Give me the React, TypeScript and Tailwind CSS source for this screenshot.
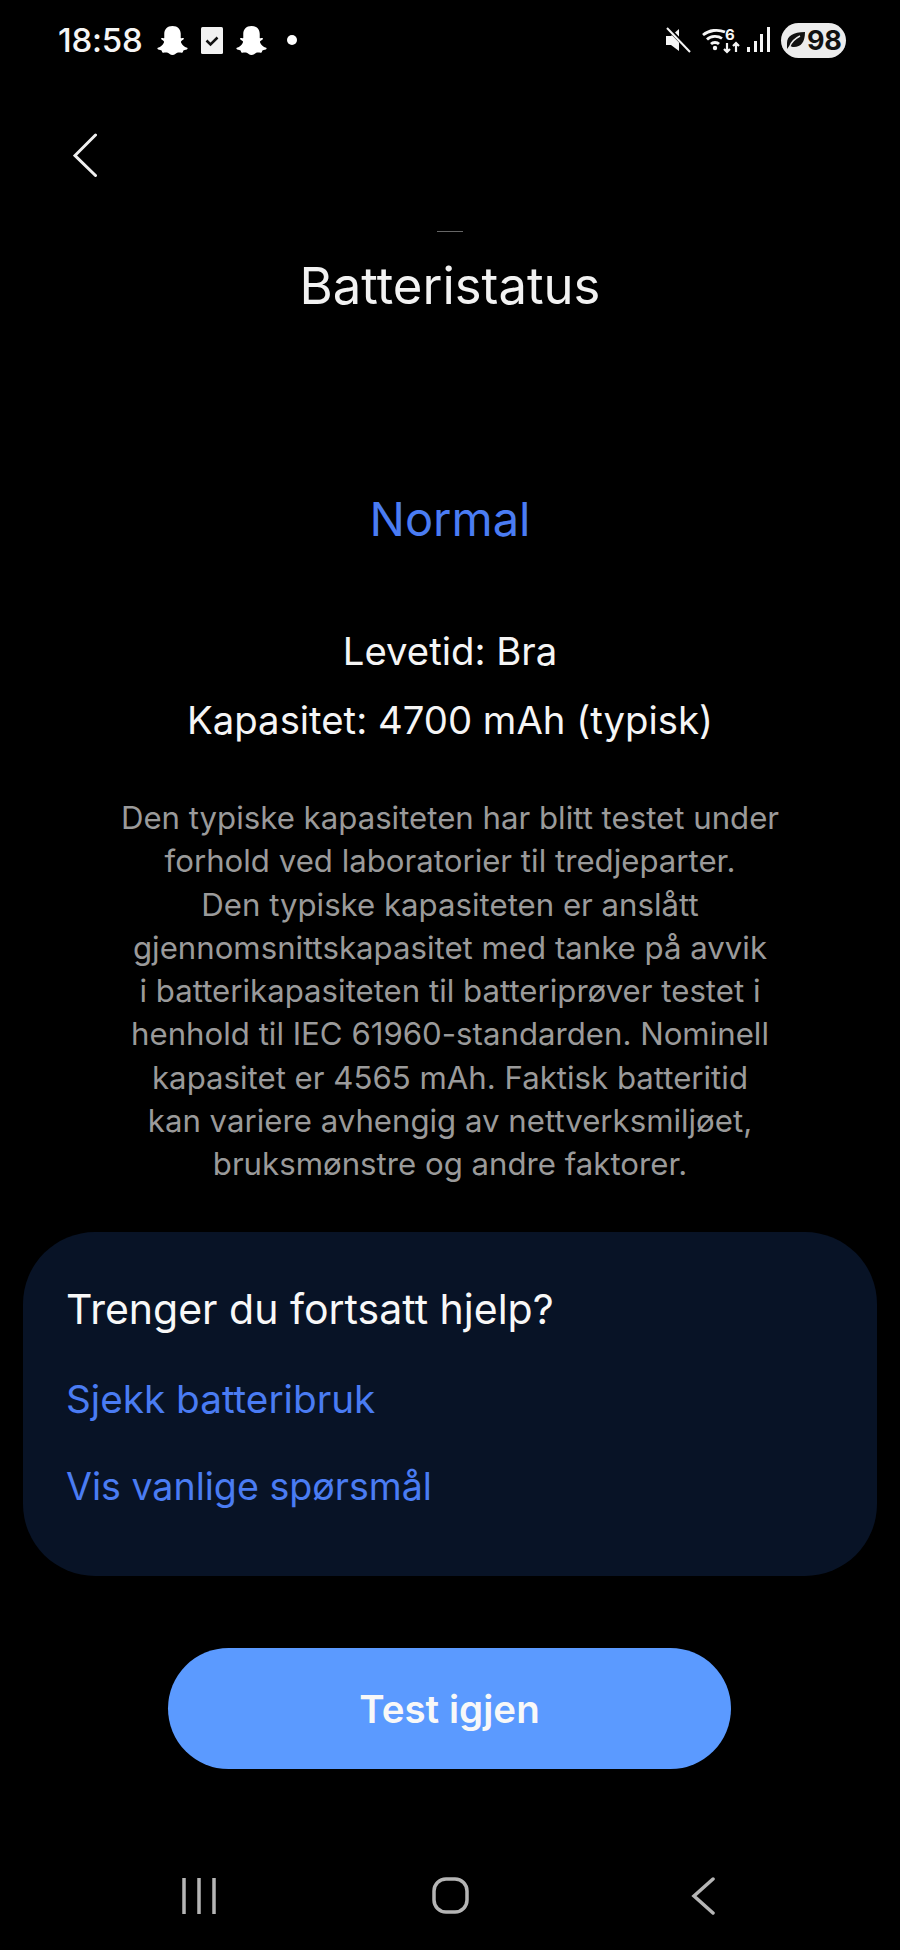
const Ghost = () => (
  <svg width="31" height="29" viewBox="0 0 32 30" fill="#fff" preserveAspectRatio="none">
    <path d="M16 0c-5.500 0-8.500 3.600-8.500 8v4.500c-1 .6-2.600-.6-3.200.3-.5 1 1.500 2 2.500 2.700.7.500.5 1.300.1 2-1 1.900-2.900 4.100-6 5-.8.300-.6 1.300.3 1.700 1.200.5 3.100.6 3.500 1.200.4.700.4 2.100 1.300 2.200 1.600.2 3.300-.6 5.100.1 1.300.5 2.500 2.300 4.900 2.300s3.600-1.800 4.900-2.300c1.800-.7 3.500.1 5.100-.1.900-.1.900-1.500 1.300-2.200.4-.6 2.300-.7 3.500-1.200.9-.4 1.100-1.400.3-1.700-3.100-.9-5-3.100-6-5-.4-.7-.6-1.500.1-2 1-.7 3-1.700 2.500-2.700-.6-.9-2.200.3-3.200-.3V8c0-4.400-3-8-8.500-8z" />
  </svg>
);

export default function App() {
  return (
    <div className="w-[900px] h-[1950px] bg-black text-white flex flex-col overflow-hidden font-['Inter','Liberation_Sans',sans-serif]">
      <div className="h-[80px] flex items-center justify-between pl-[58px] pr-[54px]">
        <div className="flex items-center">
          <span className="text-[33px] leading-none font-medium tracking-[-0.2px] text-[#f5f5f5]">18:58</span>
          <div className="ml-[14px] flex items-center">
            <Ghost />
            <svg className="ml-[13px]" width="22" height="27" viewBox="0 0 22 27">
              <rect width="22" height="27" rx="1.500" fill="#f2f2f2" />
              <path d="M5.500 13.500l4 4 7-7" fill="none" stroke="#111" strokeWidth="2.500" />
            </svg>
            <div className="ml-[13px]">
              <Ghost />
            </div>
            <span className="ml-[20px] w-[10px] h-[10px] rounded-full bg-white" />
          </div>
        </div>
        <div className="flex items-center">
          <svg width="26" height="26" viewBox="0 0 26 26">
            <path d="M1 9h5l8-7v22l-8-6H1z" fill="#f5f5f5" />
            <path d="M3 1l22 23" stroke="#000" strokeWidth="4" />
            <path d="M2 1l23 24" stroke="#f5f5f5" strokeWidth="2" />
          </svg>
          <svg className="ml-[11px]" width="38" height="28" viewBox="0 0 38 28" fill="none" stroke="#f5f5f5" strokeWidth="2.800">
            <path d="M1 9c6-5 15-6 22-3" />
            <path d="M5 13.500c4-4 11-4 15-1" />
            <path d="M9 18c2-2 6-2 8 0" />
            <circle cx="13" cy="22" r="2.200" fill="#f5f5f5" stroke="none" />
            <path d="M25 17v9M22 23l3 3 3-3M34 26v-9M31 20l3-3 3 3" strokeWidth="2.200" />
            <text x="23" y="14" fontSize="15" fontWeight="700" fill="#f5f5f5" stroke="none">6</text>
          </svg>
          <svg className="ml-[7px]" width="23" height="26" viewBox="0 0 23 26" fill="#f5f5f5">
            <rect x="0" y="20" width="3" height="5" />
            <rect x="7" y="14" width="3" height="11" />
            <rect x="13" y="7" width="3" height="18" />
            <rect x="20" y="0" width="3" height="25" />
          </svg>
          <div className="ml-[11px] w-[65px] h-[35px] rounded-full bg-[#ececec] flex items-center pl-[4px]">
            <svg width="22" height="22" viewBox="0 0 22 22">
              <path d="M2 14C2 7 8 3 20 3c0 10-4 15-11 15-2 0-3.500-.7-4.500-1.500L2 20z" fill="#111" />
              <path d="M5 17c2-5 6-8 10-10" stroke="#ececec" strokeWidth="1.400" fill="none" />
            </svg>
            <span className="text-[27px] leading-none font-bold text-[#111] tracking-[-0.3px]">98</span>
          </div>
        </div>
      </div>

      <div className="h-[100px] pl-[73px] pt-[53px]">
        <svg width="24" height="44" viewBox="0 0 24 44" fill="none" stroke="#f0f0f0" strokeWidth="3" strokeLinecap="round">
          <path d="M22.500 2L2 22.500 22.500 42.500" />
        </svg>
      </div>

      <div className="w-[26px] h-px bg-[#666] self-center mt-[51px]" />
      <h1 className="text-center text-[50.800px] leading-[60px] font-normal text-[#f2f2f2] mt-[24px]">Batteristatus</h1>

      <p className="text-center text-[47px] leading-[60px] text-[#4a7cf3] mt-[173px]">Normal</p>

      <div className="mt-[77px] flex flex-col gap-[19px] text-center text-[38.300px] leading-[50px] text-[#f5f5f5]">
        <p>Levetid: Bra</p>
        <p>Kapasitet: 4700 mAh (typisk)</p>
      </div>

      <p className="mt-[52px] text-center text-[31.200px] leading-[43.300px] text-[#9a9a9a]">
        Den typiske kapasiteten har blitt testet under
        <br />
        forhold ved laboratorier til tredjeparter.
        <br />
        Den typiske kapasiteten er anslått
        <br />
        gjennomsnittskapasitet med tanke på avvik
        <br />
        i batterikapasiteten til batteriprøver testet i
        <br />
        henhold til IEC 61960-standarden. Nominell
        <br />
        kapasitet er 4565 mAh. Faktisk batteritid
        <br />
        kan variere avhengig av nettverksmiljøet,
        <br />
        bruksmønstre og andre faktorer.
      </p>

      <div className="mt-[45px] mx-[23px] h-[344px] rounded-[72px] bg-[#081326] px-[43px] pt-[51px] flex flex-col">
        <p className="text-[41px] leading-[52px] text-[#f8f8f8]">Trenger du fortsatt hjelp?</p>
        <p className="mt-[38px] text-[38.700px] leading-[52px] text-[#4a7cf3]">Sjekk batteribruk</p>
        <p className="mt-[36px] text-[37.600px] leading-[52px] text-[#4a7cf3]">Vis vanlige spørsmål</p>
      </div>

      <button className="mt-[72px] self-center ml-[-1px] w-[563px] h-[121px] rounded-full bg-[#5b9aff] text-[38.500px] font-semibold text-[#f8f8f8]">
        <span className="relative top-[2px]">Test igjen</span>
      </button>

      <div className="mt-[108px] flex items-center pl-[182px]">
        <svg width="34" height="36" viewBox="0 0 34 36" stroke="#b5b5b5" strokeWidth="3.500">
          <path d="M2 0v36M17 0v36M32 0v36" />
        </svg>
        <svg className="ml-[216px]" width="37" height="37" viewBox="0 0 37 37" fill="none" stroke="#b5b5b5" strokeWidth="3.500">
          <rect x="2" y="2" width="33" height="33" rx="12" />
        </svg>
        <svg className="ml-[222px]" width="24" height="38" viewBox="0 0 24 38" fill="none" stroke="#b5b5b5" strokeWidth="3.500" strokeLinecap="round">
          <path d="M22 2L3 19l19 17" />
        </svg>
      </div>
    </div>
  );
}
